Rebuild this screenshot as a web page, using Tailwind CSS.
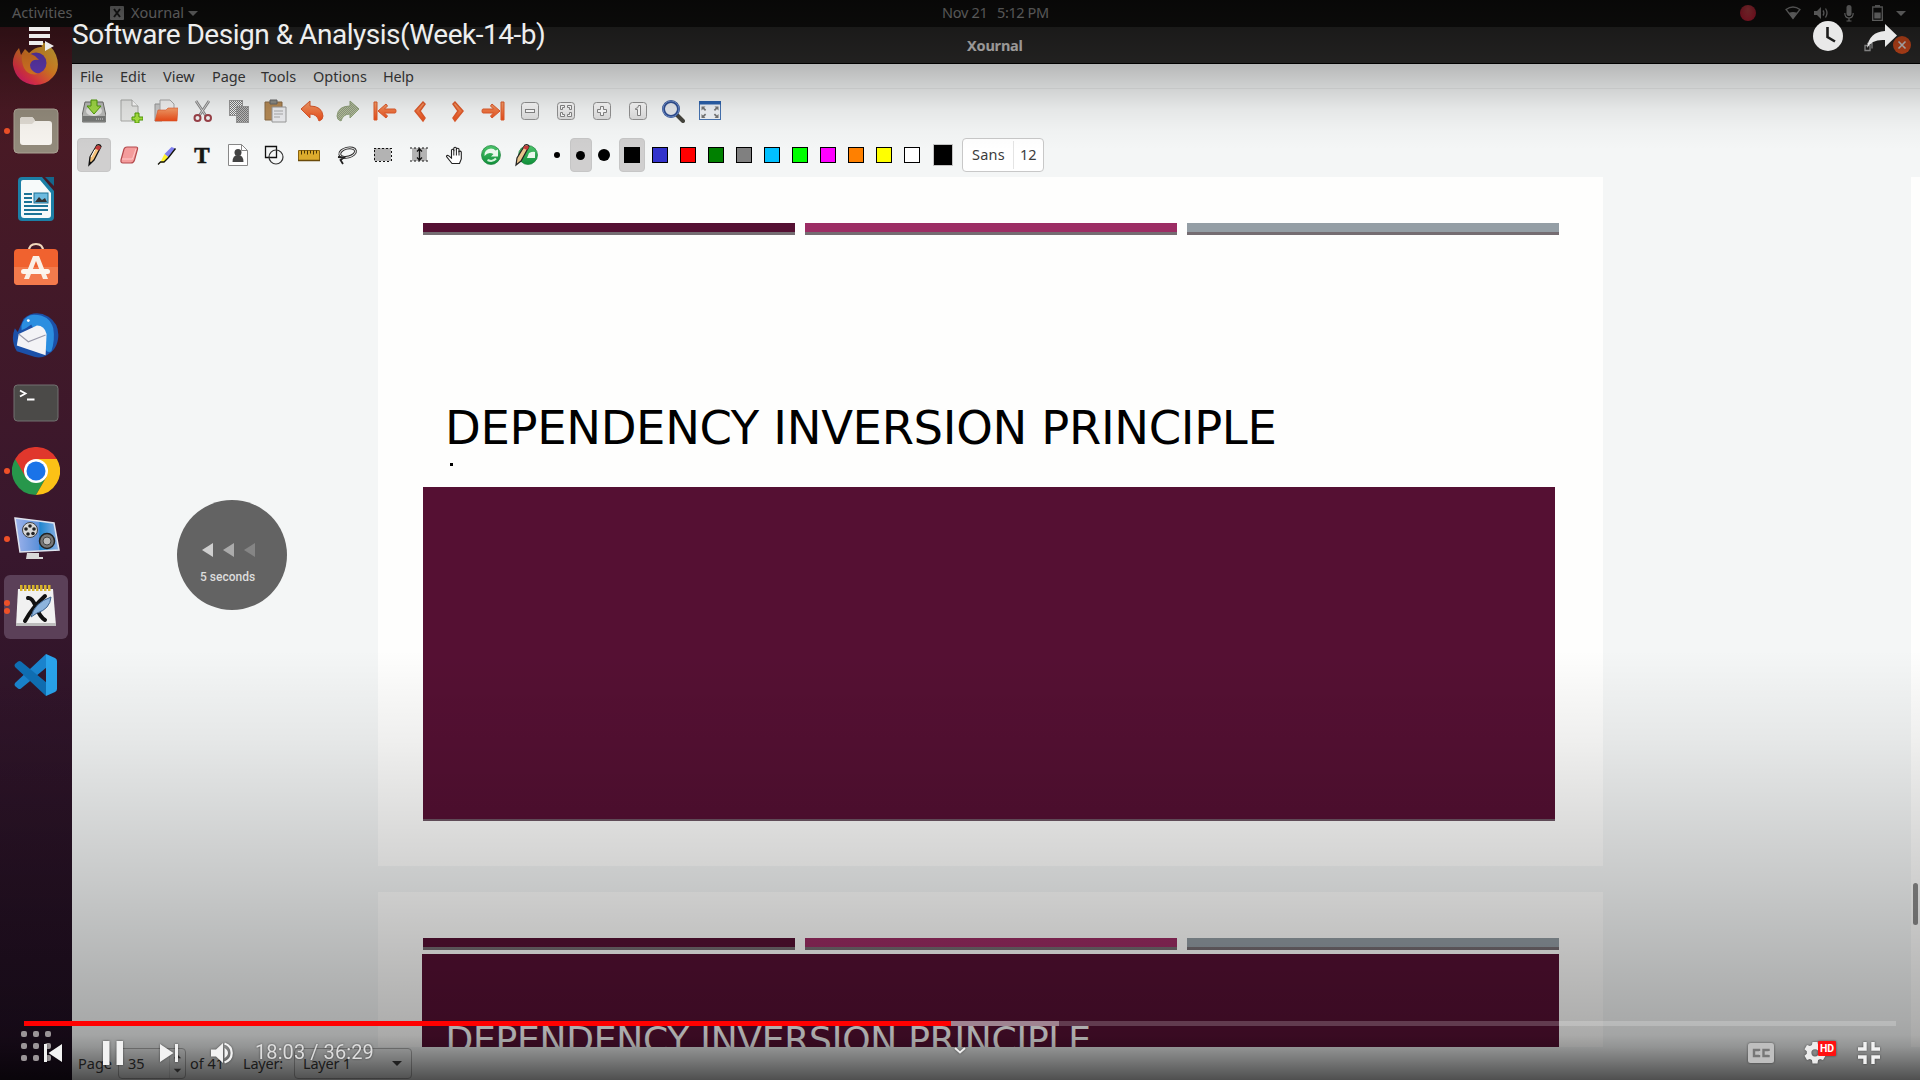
<!DOCTYPE html>
<html lang="en">
<head>
<meta charset="utf-8">
<title>Software Design &amp; Analysis(Week-14-b)</title>
<script src="https://cdn.jsdelivr.net/npm/@tailwindcss/browser@4"></script>
</head>
<body class="relative h-[1080px] w-[1920px] overflow-hidden bg-[#f4f6f6] font-['Noto_Sans',sans-serif] text-[14.5px] text-[#3c3c3c]">
<svg class="absolute h-0 w-0">
  <defs>
    <pattern id="dither" width="2" height="2" patternUnits="userSpaceOnUse"><rect width="1" height="1" fill="#777"/><rect x="1" y="1" width="1" height="1" fill="#777"/></pattern>
    <linearGradient id="orange" x1="0" y1="0" x2="0" y2="1"><stop offset="0" stop-color="#f9a06a"/><stop offset="1" stop-color="#ea4a17"/></linearGradient>
    <linearGradient id="blue" x1="0" y1="0" x2="1" y2="0"><stop offset="0" stop-color="#9fb4ec"/><stop offset=".55" stop-color="#5b8fd8"/><stop offset=".56" stop-color="#1f86cf"/><stop offset="1" stop-color="#8fb2e6"/></linearGradient>
    <linearGradient id="fox" x1="1" y1="0" x2=".2" y2="1"><stop offset="0" stop-color="#ffe14a"/><stop offset=".5" stop-color="#ff9328"/><stop offset=".8" stop-color="#ff3b4d"/><stop offset="1" stop-color="#e3187c"/></linearGradient>
    <linearGradient id="green" x1="0" y1="0" x2="0" y2="1"><stop offset="0" stop-color="#4cc46a"/><stop offset="1" stop-color="#0f8f3a"/></linearGradient>
    <linearGradient id="key" x1="0" y1="0" x2="0" y2="1"><stop offset="0" stop-color="#fff"/><stop offset="1" stop-color="#dcdcdc"/></linearGradient>
  </defs>
</svg>

<div class="flex h-full flex-col">
  <!-- system bar -->
  <header class="flex h-[27px] shrink-0 items-center bg-[#131211] pb-px text-[#a9a9a9]">
    <span class="ml-3 w-[98px] whitespace-nowrap">Activities</span>
    <svg class="h-[14px] w-[14px]" viewBox="0 0 14 14"><rect width="14" height="14" rx="1" fill="#999"/><path d="M4 3l6 8M10 3l-6 8" stroke="#222" stroke-width="2"/></svg>
    <span class="ml-[7px] w-[57px] whitespace-nowrap">Xournal</span>
    <svg class="h-[5px] w-[10px]" viewBox="0 0 10 5"><path d="M0 0h10l-5 5z" fill="#a0a0a0"/></svg>
    <span class="ml-[744px] w-[55px] tracking-[-0.3px] whitespace-nowrap">Nov 21</span>
    <span class="w-[52px] tracking-[-0.4px] whitespace-nowrap">5:12 PM</span>
    <div class="ml-[691px] h-4 w-4 rounded-full bg-radial-[at_50%_25%] from-[#d84a50] to-[#c00f2e]"></div>
    <svg class="ml-[29px] h-[14px] w-4" viewBox="0 0 16 14"><path d="M1 3.5Q8-1.500 15 3.500L8 12.500z" fill="none" stroke="#a9a9a9" stroke-width="1.300"/><path d="M4 6.800Q8 5 12 6.800L8 12.500z" fill="#a9a9a9"/></svg>
    <svg class="ml-[12px] h-[14px] w-4" viewBox="0 0 16 14"><path d="M1 5h3l4-4v12l-4-4H1z" fill="#a9a9a9"/><path d="M10 4.500q1.800 2.500 0 5M12.500 2.500q3 4.500 0 9" fill="none" stroke="#a9a9a9" stroke-width="1.300"/></svg>
    <svg class="ml-[15px] h-[17px] w-[10px]" viewBox="0 0 10 17"><rect x="2.500" width="5" height="11" rx="2.500" fill="#a9a9a9"/><path d="M.8 8q0 5 4.200 5t4.200-5M5 13v3M2.500 16h5" fill="none" stroke="#a9a9a9" stroke-width="1.200"/></svg>
    <svg class="ml-[18px] h-4 w-[11px]" viewBox="0 0 11 16"><path d="M.7 2h9.600v13.300H.7z" fill="none" stroke="#a9a9a9" stroke-width="1.300"/><path d="M3 0h5v2H3zM2.300 7.500h6.400v6H2.300z" fill="#a9a9a9"/></svg>
    <svg class="ml-[13px] h-[5px] w-[10px]" viewBox="0 0 10 5"><path d="M0 0h10l-5 5z" fill="#a9a9a9"/></svg>
  </header>

  <div class="flex min-h-0 grow">
    <!-- dock -->
    <nav class="flex w-[72px] shrink-0 flex-col gap-1 bg-linear-to-b from-[#4d1a22] via-[#38172d] to-[#1d0e20] px-1 pt-1">
      <div class="flex h-16 items-center justify-center"><svg class="h-12 w-12" viewBox="0 0 48 48"><path d="M1 26Q0 17 7 9l2 7 4-6 4 4Q24 7 30 8q-1-4-4-6 14 3 18 14 5 13-3 22-7 8-18 8Q4 44 1 26z" fill="url(#fox)"/><circle cx="24" cy="24" r="10.500" fill="#6b40c8"/><path d="M10 16q7-3 13 1l4 4q-8-1-9 5 0 6 8 9-10 2-14-6-3-7-2-13z" fill="#ff8a2a"/></svg></div>
      <div class="relative flex h-16 items-center justify-center"><i class="absolute left-0 h-[6px] w-[6px] rounded-full bg-[#ee5028]"></i><svg class="h-[46px] w-[46px]" viewBox="0 0 46 46"><rect x="1" y="1" width="44" height="44" rx="4" fill="#928a7b" stroke="#aaa294"/><path d="M7 12q0-3 3-3h8q2 0 3 2l1 2h14q3 0 3 3v18q0 3-3 3H10q-3 0-3-3z" fill="#f7f4ef"/><path d="M7 12q0-3 3-3h8q2 0 3 2l1 2-3 3H7z" fill="#dfdad2"/></svg></div>
      <div class="flex h-16 items-center justify-center"><svg class="h-[46px] w-[38px]" viewBox="0 0 38 46"><path d="M5 1h20l12 14v26q0 4-4 4H5q-4 0-4-4V5q0-4 4-4z" fill="#1c7fa6"/><path d="M28 1h9v9z" fill="#15678c"/><path d="M4 6q0-2 2-2h17l11 13v22q0 3-3 3H7q-3 0-3-3z" fill="#f7fafa"/><path d="M7 18h8M7 22h8M7 26h8M7 30h24M7 34h24M7 38h18" stroke="#1c7396" stroke-width="2"/><rect x="17" y="17" width="14" height="10" fill="#6dbbe0" stroke="#1c7396"/><path d="M18 26l4-5 3 3 3-2 2 4z" fill="#333"/></svg></div>
      <div class="flex h-16 items-center justify-center pb-[6px]"><svg class="h-12 w-[46px]" viewBox="0 0 46 48"><path d="M16 11q0-7 7-7t7 7" fill="none" stroke="#f0d7bc" stroke-width="2"/><rect x="1" y="9" width="44" height="36" rx="4" fill="#f0622f"/><path d="M1 27h44v14q0 4-4 4H5q-4 0-4-4z" fill="#f37a4c"/><path d="M20 16h6l9 23h-5l-7-18-7 18h-5z" fill="#faf0e6"/><rect x="8" y="29" width="29" height="5" rx="2.500" fill="#fdf6ee"/></svg></div>
      <div class="flex h-16 items-center justify-center"><svg class="h-12 w-12" viewBox="0 0 50 50"><path d="M12 8Q24-2 38 6q12 8 10 23-2 14-16 19-4 1-8 0L5 42Q-2 30 3 18l3 4z" fill="#1b50a8"/><path d="M11 12q4-8 12-8 16 0 20 14 2 12-2 24-4 2-6-2L20 14q-5 4-10 6-1-4 1-8z" fill="#2b8ee0"/><path d="M7 24l19-9q8 0 10 9l-1 22L5 36z" fill="#f3f3f6"/><path d="M7 24l10 8 18-7" fill="none" stroke="#9a9aaa" stroke-width="1.200"/><circle cx="17" cy="10" r="1.500" fill="#fff"/></svg></div>
      <div class="flex h-16 items-center justify-center"><svg class="h-[38px] w-[46px]" viewBox="0 0 46 38"><rect x="1" y="1" width="44" height="36" rx="3.500" fill="#4b4a48" stroke="#737170"/><path d="M7 6.500l5.500 3L7 12.500M14 15.500h7.500" fill="none" stroke="#fff" stroke-width="1.800"/></svg></div>
      <div class="relative flex h-16 items-center justify-center"><i class="absolute left-0 h-[6px] w-[6px] rounded-full bg-[#ee5028]"></i><svg class="h-12 w-12" viewBox="0 0 48 48"><path d="M3.200 12A24 24 0 0 0 24 48L34.400 30 24 24z" fill="#27974b"/><path d="M44.800 12H24L34.400 30 24 48A24 24 0 0 0 44.800 12z" fill="#fbc116"/><path d="M3.200 12A24 24 0 0 1 44.800 12H24L13.600 30z" fill="#e0372c"/><circle cx="24" cy="24" r="12" fill="#fff"/><circle cx="24" cy="24" r="9.500" fill="#1a73e8"/></svg></div>
      <div class="relative flex h-16 items-center justify-center"><i class="absolute left-0 h-[6px] w-[6px] rounded-full bg-[#ee5028]"></i><svg class="h-12 w-12" viewBox="0 0 48 48"><path d="M15 38h12v4h4v2H14z" fill="#d8d8d8"/><path d="M3 3l39 5 5 27-39 2z" fill="url(#blue)" stroke="#dfe3ee" stroke-width="1.500"/><circle cx="18" cy="15" r="7.500" fill="#d8d8d8" stroke="#444"/><g fill="#222"><circle cx="18" cy="11" r="1.800"/><circle cx="14" cy="14" r="1.800"/><circle cx="22" cy="14" r="1.800"/><circle cx="16" cy="19" r="1.800"/><circle cx="21" cy="18.500" r="1.800"/></g><circle cx="35" cy="26" r="7.500" fill="#777" stroke="#222" stroke-width="1.500"/><circle cx="35" cy="26" r="4" fill="#bbb" stroke="#444"/></svg></div>
      <div class="relative flex h-16 items-center justify-center rounded-md bg-[#5b4058]"><i class="absolute top-[25px] left-0 h-[6px] w-[6px] rounded-full bg-[#ee5028]"></i><i class="absolute top-[33px] left-0 h-[6px] w-[6px] rounded-full bg-[#ee5028]"></i><svg class="h-[46px] w-[44px]" viewBox="0 0 44 46"><path d="M4 5h35l3 37H2z" fill="#f1f1f1"/><path d="M2 39h40v3H2z" fill="#bdbdbd"/><path d="M6 4h32" stroke="#d8b42c" stroke-width="6" stroke-dasharray="2.500 1.500"/><path d="M14 14q4-1 8 9t9 13M31 12Q18 24 11 37" fill="none" stroke="#111" stroke-width="4" stroke-linecap="round"/><path d="M17 33q3-14 20-20-1 12-14 16z" fill="#8db4dc" stroke="#3f648e"/></svg></div>
      <div class="flex h-16 items-center justify-center"><svg class="h-11 w-11" viewBox="0 0 44 44"><path d="M32 1L1 30q-1 2 0 3l3 2.500q1.500 1 3 0L33 14z" fill="#1a84cf"/><path d="M32 43L1 14q-1-2 0-3l3-2.500q1.500-1 3 0L33 30z" fill="#0f6fb4"/><path d="M32 1l9 4q2 1 2 3v28q0 2-2 3l-9 4z" fill="#29a3ec"/></svg></div>
    </nav>

    <!-- window -->
    <main class="flex min-w-0 grow flex-col">
      <div class="flex h-[37px] shrink-0 items-center border-b border-black bg-[#2d2c2b] pt-px">
        <span class="ml-[895px] text-[14.5px] font-bold tracking-[-0.2px] text-[#e4e2e0]">Xournal</span>
        <svg class="ml-auto h-5 w-14" viewBox="0 0 56 20"><path d="M1 9.500h5v5H1zM3 7.500h5v5" fill="none" stroke="#bbb" stroke-width="1.300"/><circle cx="38" cy="9" r="9" fill="#e4521f"/><path d="M34.500 5.500l7 7M41.500 5.500l-7 7" stroke="#eee" stroke-width="1.600"/></svg>
      </div>
      <div class="flex h-[25px] shrink-0 items-center border-b border-black/5 pt-[2px] pl-2 text-[#3d3d3d]">
        <span class="w-10">File</span>
        <span class="w-[43px]">Edit</span>
        <span class="w-[49px]">View</span>
        <span class="w-[49px] tracking-[-0.1px]">Page</span>
        <span class="w-[52px]">Tools</span>
        <span class="w-[70px]">Options</span>
        <span class="tracking-[-0.2px]">Help</span>
      </div>

      <!-- toolbar: file and navigation -->
      <div class="flex h-[44px] shrink-0 items-center pl-[10px] *:h-6 *:w-6 *:shrink-0">
        <svg viewBox="0 0 24 24"><path d="M3 3h18l3 14v5q0 1-1 1H1q-1 0-1-1v-5z" fill="#b9bab8" stroke="#6b6b69"/><path d="M.5 17h23v5.500H.5z" fill="#767876"/><ellipse cx="12" cy="12" rx="8" ry="5" fill="#e4e4e2"/><path d="M9 1h6v6h4l-7 8-7-8h4z" fill="#a0d946" stroke="#4e9a06"/><path d="M14 20h8" stroke="#ddd" stroke-dasharray="1 1"/></svg>
        <svg class="ml-[13px]" viewBox="0 0 24 24"><path d="M2 1h11l6 6v15H2z" fill="#e7e8e6" stroke="#a9aaa7"/><path d="M13 1v6h6" fill="#fff" stroke="#a9aaa7"/><path d="M16 14h4v4h4v3h-4v3h-4v-3h-3v-3h3z" fill="#a6e03e" stroke="#4e9a06"/></svg>
        <svg class="ml-[11px]" viewBox="0 0 24 24"><path d="M1 5h7v17H1z" fill="#c9c9c9" stroke="#999"/><path d="M6 1h10l4 4v9H6z" fill="#f4f4f4" stroke="#aaa"/><path d="M4 11h8l2-2h10l-1 13H1z" fill="url(#orange)" stroke="#e0582b" stroke-width=".6"/></svg>
        <svg class="ml-[13px]" viewBox="0 0 24 24"><path d="M5 2l10 15M18 2L8 17" stroke="#858585" stroke-width="2.600"/><path d="M5 2l10 15M18 2L8 17" stroke="#eee" stroke-width=".8"/><circle cx="6.500" cy="19" r="3" fill="none" stroke="#9c4249" stroke-width="2"/><circle cx="17" cy="19" r="3" fill="none" stroke="#9c4249" stroke-width="2"/></svg>
        <svg class="ml-[12px]" viewBox="0 0 24 24" shape-rendering="crispEdges"><path d="M2 1h13v15H2z" fill="url(#dither)" stroke="#999"/><path d="M9 7h12v16H9z" fill="#bbb"/><path d="M9 7h12v16H9z" fill="url(#dither)" stroke="#999"/></svg>
        <svg class="ml-[12px]" viewBox="0 0 24 24"><path d="M2 3h17v18H2z" fill="#b58a55" stroke="#8a6a45"/><path d="M7 1h7v4H7z" fill="#8c8c86" stroke="#666"/><path d="M9 8h14v15H9z" fill="#ecedf0" stroke="#9a9a9a"/><path d="M11 12h9M11 15h9M11 18h6" stroke="#aaa"/></svg>
        <svg class="ml-[13px]" viewBox="0 0 24 24"><path d="M1 10l9-8v5q12 0 13 10 0 4-4 5-2-7-9-7v4z" fill="url(#orange)" stroke="#d9562a"/></svg>
        <svg class="ml-[12px]" viewBox="0 0 24 24"><path d="M23 10l-9-8v5Q2 7 1 17q0 4 4 5 2-7 9-7v4z" fill="#b6c59a"/><path d="M23 10l-9-8v5Q2 7 1 17q0 4 4 5 2-7 9-7v4z" fill="url(#dither)" fill-opacity=".6" stroke="#8fa07a"/></svg>
        <svg class="ml-[13px]" viewBox="0 0 24 24"><path d="M1 3h3v18H1zM5 12l8-7 1.500 2-3 3H22q1 0 1 2t-1 2H11.500l3 3-1.500 2z" fill="url(#orange)" stroke="#df5a2b"/></svg>
        <svg class="ml-[11px]" viewBox="0 0 24 24"><path d="M15 3l2 2-5 7 5 7-2 3L7 12z" fill="url(#orange)" stroke="#df5a2b" stroke-width="1.500"/></svg>
        <svg class="ml-[14px]" viewBox="0 0 24 24"><path d="M9 3L7 5l5 7-5 7 2 3 8-10z" fill="url(#orange)" stroke="#df5a2b" stroke-width="1.500"/></svg>
        <svg class="ml-[11px]" viewBox="0 0 24 24"><path d="M23 3h-3v18h3zM19 12l-8-7-1.500 2 3 3H2q-1 0-1 2t1 2h10.500l-3 3 1.500 2z" fill="url(#orange)" stroke="#df5a2b"/></svg>
        <svg class="ml-[13px]" viewBox="0 0 24 24"><rect x="3.500" y="3.500" width="17" height="17" rx="3" fill="url(#key)" stroke="#929292"/><rect x="7.500" y="10.500" width="9" height="3" fill="#fff" stroke="#858585"/></svg>
        <svg class="ml-[12px]" viewBox="0 0 24 24"><rect x="3.500" y="3.500" width="17" height="17" rx="3" fill="url(#key)" stroke="#929292"/><path d="M6.500 10.500v-4h4v2h-2v2zM13.500 6.500h4v4h-2v-2h-2zM6.500 13.500v4h4v-2h-2v-2zM17.500 13.500v4h-4v-2h2v-2z" fill="#fff" stroke="#858585"/></svg>
        <svg class="ml-[12px]" viewBox="0 0 24 24"><rect x="3.500" y="3.500" width="17" height="17" rx="3" fill="url(#key)" stroke="#929292"/><path d="M10.500 7.500h3v3h3v3h-3v3h-3v-3h-3v-3h3z" fill="#fff" stroke="#858585"/></svg>
        <svg class="ml-[12px]" viewBox="0 0 24 24"><rect x="3.500" y="3.500" width="17" height="17" rx="3" fill="url(#key)" stroke="#929292"/><path d="M9.500 9.500q3 0 3-3h2v10h-3v-6h-2z" fill="#fff" stroke="#858585"/></svg>
        <svg class="ml-[11px]" viewBox="0 0 24 24"><path d="M15 15l7 7" stroke="#45443d" stroke-width="4" stroke-linecap="round"/><circle cx="10" cy="10" r="7.500" fill="#e6e9ee" stroke="#2f4f93" stroke-width="3"/><circle cx="10" cy="10" r="8" fill="none" stroke="#7c9bd4" stroke-width=".8"/></svg>
        <svg class="ml-[13px]" viewBox="0 0 24 24"><rect x="1.500" y="2.500" width="21" height="18" fill="#f1f4f8" stroke="#4673b2"/><path d="M1 2h22v3.500H1z" fill="#2c62ad"/><path d="M3.500 7.500h4l-1.300 1.300 2 2-1.200 1.200-2-2-1.500 1.500zM20.500 7.500h-4l1.300 1.300-2 2 1.200 1.200 2-2 1.500 1.500zM3.500 19h4l-1.300-1.300 2-2L7 14.500l-2 2L3.500 15zM20.500 19h-4l1.300-1.300-2-2 1.200-1.200 2 2 1.500-1.500z" fill="#777"/></svg>
      </div>

      <!-- toolbar: drawing tools and colours -->
      <div class="flex h-[44px] shrink-0 items-center pl-[5px]">
        <div class="flex h-[34px] w-[34px] items-center justify-center rounded-[4px] border border-[#c6c6c6] bg-[#d0cfcf]"><svg class="h-6 w-6" viewBox="0 0 24 24"><path d="M7 22l1-8 7-12q3-1 4 1.500L12 17z" fill="#f4c37c" stroke="#111" stroke-width="1.300"/><path d="M14.500 3q3-1.500 4.500 1l-2 3.500-4-2z" fill="#c33b3b"/><path d="M13 6.500L9 14" stroke="#fff"/><path d="M7 22l.5-4 2 1.500z" fill="#111"/></svg></div>
        <svg class="ml-[6px] h-6 w-6" viewBox="0 0 24 24"><path d="M10 4h9q2 0 1.500 2l-3 11q-1 3-3.500 3H6q-2.500 0-2-3L7 6q.8-2 3-2z" fill="#f49c9c" stroke="#b3494c" stroke-width="1.200"/><path d="M5 16h10.500L19 6" fill="none" stroke="#ffc9c9"/></svg>
        <svg class="ml-[14px] h-6 w-6" viewBox="0 0 24 24"><path d="M16.500 4l4 1.500-7 9-4-3.500z" fill="#8080f0"/><path d="M9.500 11l4 3.500-4.500 4.500-4 1z" fill="#fff22a"/><path d="M20.500 5.500l-7 9L9 19H5.500L3 21.500" fill="none" stroke="#15150a" stroke-width="1.300"/></svg>
        <svg class="ml-[11px] h-6 w-6" viewBox="0 0 24 24"><text x="12" y="20" text-anchor="middle" font-family="Liberation Serif, serif" font-weight="bold" font-size="23" fill="#161616" stroke="#161616" stroke-width=".6">T</text></svg>
        <svg class="ml-[12px] h-6 w-6" viewBox="0 0 24 24"><path d="M2.500 1.500h13l6 6v15h-19z" fill="#fff" stroke="#888"/><path d="M15.500 1.500v6h6" fill="none" stroke="#888"/><circle cx="12" cy="9.500" r="3.500" fill="#444"/><path d="M6.500 19q0-7 5.500-7t5.500 7z" fill="#444"/></svg>
        <svg class="ml-[12px] h-6 w-6" viewBox="0 0 24 24"><path d="M3.500 3.500h11v11h-11z" fill="none" stroke="#111" stroke-width="1.300"/><circle cx="14" cy="14" r="7" fill="none" stroke="#333" stroke-width="1.200"/></svg>
        <svg class="ml-[11px] h-6 w-6" viewBox="0 0 24 24"><path d="M1.500 7.500h21v10h-21z" fill="#dcab2d" stroke="#8a6410"/><path d="M4.500 7.500v4M7.500 7.500v3M10.500 7.500v4M13.500 7.500v3M16.500 7.500v4M19.500 7.500v3" stroke="#4a3505"/><path d="M1 17.500h22" stroke="#6a4a0a" stroke-width="1.500"/></svg>
        <svg class="ml-[14px] h-6 w-6" viewBox="0 0 24 24"><g transform="rotate(-14 13 9)"><ellipse cx="12.500" cy="9.500" rx="8" ry="4.500" fill="none" stroke="#222" stroke-width="2.800"/><ellipse cx="12.500" cy="9.500" rx="8" ry="4.500" fill="none" stroke="#e9e9e9"/></g><path d="M3 14l6 .5-3.500 2.500 2.500 4" fill="none" stroke="#222" stroke-width="1.800"/></svg>
        <svg class="ml-[11px] h-6 w-6" viewBox="0 0 24 24" shape-rendering="crispEdges"><rect x="4" y="5" width="17" height="13" fill="#b3b3b3" stroke="#111" stroke-dasharray="2 2"/></svg>
        <svg class="ml-[13px] h-6 w-6" viewBox="0 0 24 24"><path d="M5 5h15v13H5z" fill="#b3b3b3"/><path d="M3 5h18M3 18h18" stroke="#111" stroke-dasharray="2 2"/><path d="M12.500 6v11M10 8.500l2.500-2.500 2.500 2.500M10 14.500l2.500 2.500 2.500-2.500" fill="none" stroke="#111" stroke-width="1.300"/></svg>
        <svg class="ml-[12px] h-6 w-6" viewBox="0 0 24 24"><path d="M9 20.500l-5.500-7q0-1.800 2-.8l3 2.500V7q1-1.500 2.300 0V5q1.300-1.500 2.600 0v1q1.300-1.500 2.600 0v2.500q1.500-.8 2.300.5v7L16.500 20.500z" fill="#fff" stroke="#222" stroke-width="1.100"/><path d="M10.800 7v5.500M13.400 6v6.500M16 8v4.500" stroke="#222"/></svg>
        <svg class="ml-[12px] h-6 w-6" viewBox="0 0 24 24"><circle cx="12" cy="12" r="9.500" fill="url(#green)" stroke="#18803a" stroke-width=".7"/><path d="M5.500 13Q5 6 12 5.500q3 0 4.500 2L19 6.500v7h-7l2.500-2.500q-5-3-9 2z" fill="#e9f8ec"/><path d="M8.500 17q5 2.500 8.500-1.500" stroke="#d3f2da" stroke-width="2" fill="none"/></svg>
        <svg class="ml-[11px] h-6 w-6" viewBox="0 0 24 24"><circle cx="14" cy="12" r="9.500" fill="url(#green)" stroke="#18803a" stroke-width=".7"/><path d="M13 15l2-5q4-2 6-1v6z" fill="#e9f8ec"/><path d="M2 22l1-7 8-13q3-1 4 1.500L7 18z" fill="#e8c48c" stroke="#222" stroke-width="1.200"/><path d="M10.500 3q3-1.500 4.500 1l-2 3-4-2z" fill="#c33b3b"/></svg>
        <i class="ml-[16px] h-[6px] w-[6px] rounded-full bg-black"></i>
        <div class="ml-[10px] flex h-[34px] w-[22px] items-center justify-center rounded-[4px] border border-[#c6c6c6] bg-[#d0cfcf] pr-px"><i class="h-[9px] w-[9px] rounded-full bg-black"></i></div>
        <i class="ml-[6px] h-3 w-3 rounded-full bg-black"></i>
        <div class="ml-[9px] flex h-[34px] w-[26px] items-center justify-center rounded-[4px] border border-[#c6c6c6] bg-[#d0cfcf]"><i class="h-4 w-4 bg-black"></i></div>
        <div class="ml-[7px] flex gap-3 *:h-4 *:w-4 *:border *:border-black">
          <i class="bg-[#3333cc]"></i><i class="bg-[#ff0000]"></i><i class="bg-[#008000]"></i><i class="bg-[#808080]"></i><i class="bg-[#00c0ff]"></i><i class="bg-[#00ff00]"></i><i class="bg-[#ff00ff]"></i><i class="bg-[#ff8000]"></i><i class="bg-[#ffff00]"></i><i class="bg-white"></i>
        </div>
        <i class="ml-[13px] h-[22px] w-5 border border-[#c4c4c4] bg-black"></i>
        <div class="ml-[9px] flex h-[34px] w-[82px] items-center rounded-[4px] border border-[#c8c8c8] bg-white">
          <span class="ml-[9px] w-[42px] tracking-[0.2px]">Sans</span>
          <span class="-ml-px flex h-7 items-center border-l border-[#e4e4e4] pl-[6px]">12</span>
        </div>
      </div>

      <!-- pages -->
      <div class="flex h-[870px] shrink-0 justify-between pl-[306px]">
        <div class="flex w-[1225px] flex-col gap-[26px] overflow-hidden">
          <section class="h-[689px] shrink-0 bg-[#fefefd] pt-[46px] pl-[45px]">
            <div class="flex gap-[10px] *:h-[12px] *:w-[372px] *:border-b-[3px] *:border-[#756d72]">
              <i class="bg-[#551033]"></i><i class="bg-[#9c2d64]"></i><i class="bg-[#949ea5]"></i>
            </div>
            <h1 class="mt-[165px] ml-[22px] h-[56px] font-['DejaVu_Sans',sans-serif] text-[46.5px] leading-[56px] tracking-[-0.35px] whitespace-nowrap text-black">DEPENDENCY INVERSION PRINCIPLE</h1>
            <i class="mt-[7px] ml-[27px] block h-[3px] w-[3px] bg-black"></i>
            <div class="mt-[21px] h-[334px] w-[1132px] border-b-2 border-[#6d5664] bg-[#551033]"></div>
          </section>
          <section class="h-[155px] shrink-0 bg-[#fefefd] pt-[46px] pl-[44px]">
            <div class="ml-px flex gap-[10px] *:h-[12px] *:w-[372px] *:border-b-[3px] *:border-[#756d72]">
              <i class="bg-[#551033]"></i><i class="bg-[#9c2d64]"></i><i class="bg-[#949ea5]"></i>
            </div>
            <div class="mt-1 h-[93px] w-[1137px] overflow-hidden bg-[#551033] pt-[64px] pl-[23.5px] font-['DejaVu_Sans',sans-serif] text-[36px] leading-[44px] tracking-[-0.22px] text-white">DEPENDENCY INVERSION PRINCIPLE</div>
          </section>
        </div>
        <div class="w-[9px] bg-[#fefefd] pt-[706px] pl-[2px]"><i class="block h-[42px] w-[5px] rounded-full bg-[#8a8a8a]"></i></div>
      </div>

      <!-- status bar -->
      <footer class="flex h-[33px] shrink-0 items-center pl-[6px]">
        <span class="w-10">Page</span>
        <div class="flex h-[31px] w-[68px] items-center rounded-[4px] border border-[#b2b2b2] pl-[9px]"><span class="w-[41px]">35</span>
          <svg class="h-[29px] w-4 border-l border-black/10" viewBox="0 0 16 29"><path d="M4 9h8l-4-4zM4 20h8l-4 4z" fill="#555"/></svg></div>
        <span class="ml-1 w-[53px]">of 41</span>
        <span class="w-[51px] tracking-[-0.2px]">Layer:</span>
        <div class="flex h-[31px] w-[118px] items-center rounded-[4px] border border-[#b2b2b2] pl-2"><span class="w-[89px] tracking-[-0.2px]">Layer 1</span>
          <svg class="h-[5px] w-[10px]" viewBox="0 0 10 5"><path d="M0 0h10l-5 5z" fill="#444"/></svg></div>
      </footer>
    </main>
  </div>
</div>

<!-- shading above and below the video -->
<div class="absolute inset-x-0 top-0 h-[150px] bg-[linear-gradient(rgba(0,0,0,.57)_0,rgba(0,0,0,.4)_30px,rgba(0,0,0,.25)_64px,rgba(0,0,0,.15)_88px,rgba(0,0,0,.06)_110px,rgba(0,0,0,.02)_130px,transparent_150px)]"></div>
<div class="absolute inset-x-0 bottom-0 h-[430px] bg-[linear-gradient(transparent_0,rgba(0,0,0,.06)_90px,rgba(0,0,0,.18)_230px,rgba(0,0,0,.31)_370px,rgba(0,0,0,.33)_385px,rgba(0,0,0,.4)_397px,rgba(0,0,0,.68)_430px)]"></div>

<!-- player header -->
<div class="absolute inset-x-0 top-0 flex h-[72px] items-start pl-[29px]">
  <svg class="mt-[27px] h-6 w-[26px]" viewBox="0 0 26 24"><path d="M0 0h21v4H0zM0 7h21v4H0zM0 14h14v4H0zM16 14l9 5-9 5z" fill="#ececec"/></svg>
  <div class="mt-[17px] ml-[17px] font-['Roboto',sans-serif] text-[28px] leading-[36px] tracking-[-0.48px] text-[#eee]">Software Design &amp; Analysis(Week-14-b)</div>
  <svg class="absolute top-[21px] left-[1813px] h-[30px] w-[30px]" viewBox="0 0 30 30"><circle cx="15" cy="15" r="15" fill="#e9e9e9"/><path d="M14.500 6v10l7.500 4.500" fill="none" stroke="#1d1d1d" stroke-width="2.600"/></svg>
  <svg class="absolute top-6 left-[1867px] h-6 w-[30px]" viewBox="0 0 30 24"><path d="M18 0l12 11.500L18 23v-7Q5 15 0 24 2 8 18 7z" fill="#e9e9e9"/></svg>
</div>

<!-- rewind bubble -->
<div class="absolute top-[500px] left-[177px] flex h-[110px] w-[110px] flex-col rounded-full bg-[#636363] pt-[43px] pl-[25px] font-['Roboto',sans-serif] text-xs font-medium text-[#ddd]">
  <svg class="h-[14px] w-[53px]" viewBox="0 0 53 14"><path d="M11 0v14L0 7z" fill="#cfcfcf"/><path d="M32 0v14L21 7z" fill="#ababab"/><path d="M53 0v14L42 7z" fill="#858585"/></svg>
  <span class="mt-3 -ml-[2px]">5 seconds</span>
</div>

<!-- app grid button -->
<div class="absolute top-[1031px] left-[21px] grid grid-cols-3 gap-[6px] *:h-[6px] *:w-[6px] *:rounded-[2px] *:bg-[#9a9497]">
  <i></i><i></i><i></i><i></i><i></i><i></i><i></i><i></i><i></i>
</div>

<!-- player controls -->
<div class="absolute inset-x-0 top-[1021px] flex h-[59px] flex-col">
  <div class="mx-6 flex h-[5px] bg-white/20">
    <div class="bg-[#f00]" style="width:49.5%"></div><div class="bg-[#c8b4be]/60" style="width:5.77%"></div>
  </div>
  <div class="flex h-[54px] items-center pl-[44px] drop-shadow-[0_0_1px_rgba(0,0,0,0.5)]">
    <svg class="h-[18px] w-[18px]" viewBox="0 0 18 18"><path d="M0 0h3v18H0zM18 0v18L4.500 9z" fill="#f2f2f2"/></svg>
    <svg class="ml-[41px] h-6 w-5" viewBox="0 0 20 24"><path d="M0 0h6.500v24H0zM13.500 0H20v24h-6.500z" fill="#f2f2f2"/></svg>
    <svg class="ml-[37px] h-[18px] w-[18px]" viewBox="0 0 18 18"><path d="M15 0h3v18h-3zM0 0v18l13.500-9z" fill="#f2f2f2"/></svg>
    <svg class="ml-[33px] h-[22px] w-[22px]" viewBox="0 0 22 22"><path d="M0 7.500h5L12 1v20l-7-6.500H0zM13.500 6q3.500 2 3.500 5t-3.500 5z" fill="#f2f2f2"/><path d="M13.500 1.500Q20.700 4 20.700 11t-7.200 9.500" fill="none" stroke="#f2f2f2" stroke-width="2.300"/></svg>
    <span class="mb-[2px] ml-[22px] w-[118px] font-['Roboto',sans-serif] text-[20px] leading-6 tracking-[0.08px] whitespace-nowrap text-[#ddd]">18:03 / 36:29</span>
    <svg class="mb-[6px] ml-[581px] h-[7px] w-3" viewBox="0 0 12 7"><path d="M1 1l5 4.500L11 1" fill="none" stroke="#eee" stroke-width="2"/></svg>
    <svg class="ml-[782px] h-5 w-[26px]" viewBox="0 0 26 20"><rect width="26" height="20" rx="2.500" fill="#bfbfbf"/><path d="M11 8V7H6v6h5v-1M20.500 8V7h-5v6h5v-1" fill="none" stroke="#777" stroke-width="2.400"/></svg>
    <div class="relative ml-[30px] h-[22px] w-6">
      <svg class="h-[22px] w-[22px]" viewBox="0 0 22 22"><path fill-rule="evenodd" d="M8.500 0h5l.6 3 2 1.100L19 3l2.500 4.300-2.300 2v2.400l2.300 2L19 18l-2.900-1-2 1.100-.6 3.400h-5l-.6-3.400L5.900 17 3 18 .5 13.700l2.300-2V9.300l-2.300-2L3 3l2.900 1.100 2-1.100zM11 7.200a3.600 3.600 0 1 0 0 7.200 3.600 3.600 0 0 0 0-7.200z" fill="#ececec"/></svg>
      <span class="absolute top-[-1px] left-[14px] flex h-[15px] w-[18px] items-center justify-center rounded-[1px] bg-[#f11] font-['Roboto',sans-serif] text-[10.500px] font-bold text-white">HD</span>
    </div>
    <svg class="ml-[30px] h-[22px] w-[22px]" viewBox="0 0 22 22"><path d="M0 7h7V0M15 0v7h7M0 15h7v7M15 22v-7h7" fill="none" stroke="#f2f2f2" stroke-width="3.400"/></svg>
  </div>
</div>
</body>
</html>
